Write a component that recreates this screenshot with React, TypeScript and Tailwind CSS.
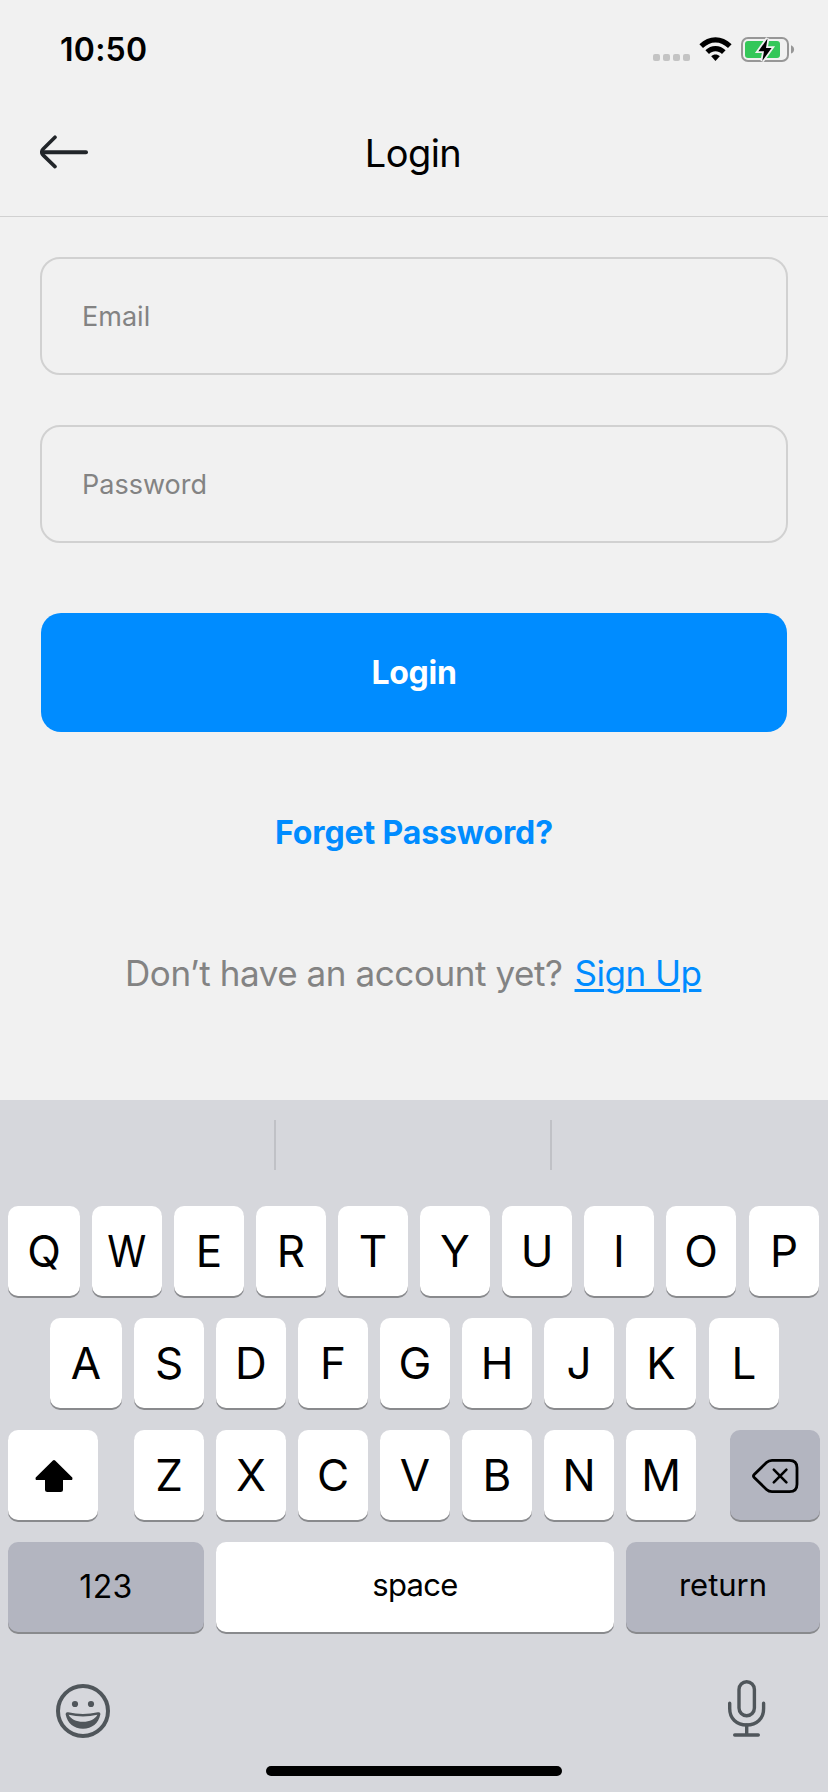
import type { ReactNode } from "react";

function StatusBar() {
  return (
    <div className="flex h-[90px] items-center justify-between pt-[10px] pl-[60px] pr-[33px]">
      <span className="text-[32px] leading-none font-semibold tracking-[0.26px] text-black">10:50</span>
      <svg className="h-7 w-[142px]" viewBox="653 36 142 28" fill="none">
        <g fill="#c4c4c4">
          <rect x="653" y="54" width="7" height="7" rx="2" />
          <rect x="663" y="54" width="7" height="7" rx="2" />
          <rect x="673" y="54" width="7" height="7" rx="2" />
          <rect x="683" y="54" width="7" height="7" rx="2" />
        </g>
        <g fill="#000">
          <path d="M699.4 44.2C704.2 39.7 709.6 37.2 715.5 37.2S726.8 39.7 731.6 44.2L728 47.9C724.3 44.4 720.1 42.4 715.5 42.4S706.7 44.4 703 47.9Z" />
          <path d="M705.4 50.2C708.3 47.4 711.7 45.9 715.5 45.9S722.7 47.4 725.6 50.2L722 53.9C720.1 52.1 717.9 51.2 715.5 51.2S710.9 52.1 709 53.9Z" />
          <path d="M711.2 56.2C712.4 55.1 713.9 54.5 715.5 54.5S718.6 55.1 719.8 56.2L715.5 61Z" />
        </g>
        <rect x="742" y="38" width="46" height="23" rx="6" stroke="#979797" strokeWidth="2" />
        <rect x="745" y="41" width="35" height="17" rx="3" fill="#34c759" />
        <path d="M791 45.3C793 46 794.1 47.6 794.1 49.4S793 52.8 791 53.5Z" fill="#979797" />
        <path d="M767.5 38.4L758.4 51.2H764L762.3 61L771.6 48H766Z" fill="#000" stroke="#f1f1f1" strokeWidth="3.6" paintOrder="stroke" />
      </svg>
    </div>
  );
}

function Header() {
  return (
    <header className="grid h-[127px] grid-cols-[1fr_auto_1fr] items-center border-b border-[#d1d1d1] pl-10 pr-[42px]">
      <svg className="h-9 w-12" viewBox="40 135 48 36" fill="none" stroke="#212529" strokeWidth="4" strokeLinecap="round" strokeLinejoin="round">
        <path d="M86 152.3H43" />
        <path d="M55 137.2L43.4 148.8Q40.2 152.3 43.4 155.4L55 166.6" strokeWidth="3.6" />
      </svg>
      <h1 className="text-[38px] leading-none font-normal tracking-[-0.57px] text-black">Login</h1>
    </header>
  );
}

function Field({ label, type }: { label: string; type: string }) {
  return (
    <input
      type={type}
      placeholder={label}
      className="block h-[118px] w-full rounded-[20px] border-2 border-[#d1d1d1] bg-transparent px-10 text-[27px] tracking-[0.02px] outline-none placeholder:text-[#838383]"
    />
  );
}

function LoginForm() {
  return (
    <main className="h-[883px] px-10 pt-10">
      <Field label="Email" type="email" />
      <div className="h-[50px]" />
      <Field label="Password" type="password" />
      <div className="px-px pt-[70px]">
        <button className="h-[119px] w-full rounded-[20px] bg-[#008cff] text-[32px] leading-none font-bold tracking-[-0.28px] text-white">
          Login
        </button>
      </div>
      <a className="mt-[81px] flex h-10 items-center justify-center text-[32px] leading-none font-bold tracking-[-0.12px] text-[#008cff]">
        Forget Password?
      </a>
      <p className="mt-[98px] flex h-11 items-center pl-[85px] text-[35px] leading-none whitespace-nowrap">
        <span className="tracking-[-0.42px] text-[#838383]">Don’t have an account yet?</span>
        <a className="ml-3 tracking-[-0.5px] text-[#008cff] underline decoration-[3px] underline-offset-[3px]">Sign Up</a>
      </p>
    </main>
  );
}

function Key({ className, children }: { className: string; children: ReactNode }) {
  return (
    <button className={`flex h-[90px] shrink-0 items-center justify-center rounded-[10px] leading-none text-black shadow-[0_2px_0_#898a8d] ${className}`}>
      {children}
    </button>
  );
}

function LetterKey({ letter, wide = false }: { letter: string; wide?: boolean }) {
  return (
    <Key className={`bg-white text-[44px] ${wide ? "w-[72px]" : "w-[70px]"}`}>
      <span className={letter === "W" ? "scale-x-90" : ""}>{letter}</span>
    </Key>
  );
}

function Keyboard() {
  return (
    <section className="flex h-[692px] flex-col bg-[#d6d7dc]">
      <div className="flex h-[106px] pt-5">
        <div className="h-[50px] w-[276px] border-r-2 border-[#c0c1c6]" />
        <div className="h-[50px] w-[276px] border-r-2 border-[#c0c1c6]" />
      </div>
      <div className="flex flex-col gap-[22px]">
        <div className="flex gap-3 pl-2">
          {"QWERTYUIO".split("").map((l) => (
            <LetterKey key={l} letter={l} wide={l === "Q"} />
          ))}
          <div className="pl-px"><LetterKey letter="P" /></div>
        </div>
        <div className="flex gap-3 pl-[50px]">
          {"ASDFGHJK".split("").map((l) => (
            <LetterKey key={l} letter={l} wide={l === "A"} />
          ))}
          <div className="pl-px"><LetterKey letter="L" /></div>
        </div>
        <div className="flex pl-2">
          <Key className="w-[90px] bg-white">
            <svg className="h-[34px] w-10" viewBox="33 1458 40 34">
              <path d="M52.9 1460.5Q54 1459.5 55.1 1460.5L72.3 1477.4Q73 1480 71 1480H63V1489.5Q63 1492 60.5 1492H47.5Q45 1492 45 1489.5V1480H37Q35 1480 35.7 1477.4Z" fill="#000" />
            </svg>
          </Key>
          <div className="mr-[34px] ml-9 flex gap-3">
            {"ZXCVBNM".split("").map((l) => (
              <LetterKey key={l} letter={l} />
            ))}
          </div>
          <Key className="w-[90px] bg-[#b3b5c0]">
            <svg className="h-9 w-12" viewBox="751 1457 48 36" fill="none" stroke="#000" strokeLinecap="round" strokeLinejoin="round">
              <path d="M772 1460.4H789.5Q797 1460.4 797 1467.8V1484.2Q797 1491.6 789.5 1491.6H772Q768.8 1491.6 766.5 1489.4L754.2 1477.6Q752.6 1476 754.2 1474.4L766.5 1462.6Q768.8 1460.4 772 1460.4Z" strokeWidth="2.8" />
              <path d="M773.8 1469.6L786.4 1482.4M786.4 1469.6L773.8 1482.4" strokeWidth="2.6" />
            </svg>
          </Key>
        </div>
        <div className="flex gap-3 pl-2">
          <Key className="w-[196px] bg-[#b3b5c0] text-[32px] tracking-[0.4px]">123</Key>
          <Key className="w-[398px] bg-white pb-[5px] text-[31px] tracking-[-0.65px]">space</Key>
          <Key className="w-[194px] bg-[#b3b5c0] pb-[5px] text-[31px]">return</Key>
        </div>
      </div>
      <div className="flex h-[134px] items-start justify-between pt-[46px] pr-[62px] pl-14">
        <svg className="mt-[6px] h-[54px] w-[54px]" viewBox="56 1684 54 54" fill="none">
          <circle cx="83" cy="1711" r="25" stroke="#50565b" strokeWidth="4" />
          <circle cx="75" cy="1704" r="3.1" fill="#50565b" />
          <circle cx="91" cy="1704" r="3.1" fill="#50565b" />
          <path d="M65.6 1714.3Q65.6 1711.8 68.2 1712.3Q83 1715.8 97.8 1712.3Q100.7 1711.8 100.4 1714.3C98.5 1723.5 92 1728.8 83 1728.8S67.5 1723.5 65.6 1714.3Z" fill="#50565b" />
          <path d="M68.6 1714.8Q83 1718.3 97.4 1714.8C94.8 1719.5 90 1721.8 83 1721.8S71.2 1719.5 68.6 1714.8Z" fill="#d6d7dc" />
        </svg>
        <svg className="mt-px h-[60px] w-[38px]" viewBox="728 1679 38 60" fill="none" stroke="#50565b" strokeWidth="3.4" strokeLinecap="round">
          <rect x="739" y="1681.7" width="15.4" height="34" rx="7.7" />
          <path d="M729.7 1703.3V1708.5C729.7 1718.5 736.5 1725 746.7 1725S763.6 1718.5 763.6 1708.5V1703.3" />
          <path d="M746.7 1725V1735M734.7 1735H758.3" />
        </svg>
      </div>
      <div className="mx-auto h-[10px] w-[296px] rounded-full bg-black" />
    </section>
  );
}

export default function App() {
  return (
    <div className="h-[1792px] w-[828px] overflow-hidden bg-[#f1f1f1] font-[Inter,sans-serif]">
      <StatusBar />
      <Header />
      <LoginForm />
      <Keyboard />
    </div>
  );
}
